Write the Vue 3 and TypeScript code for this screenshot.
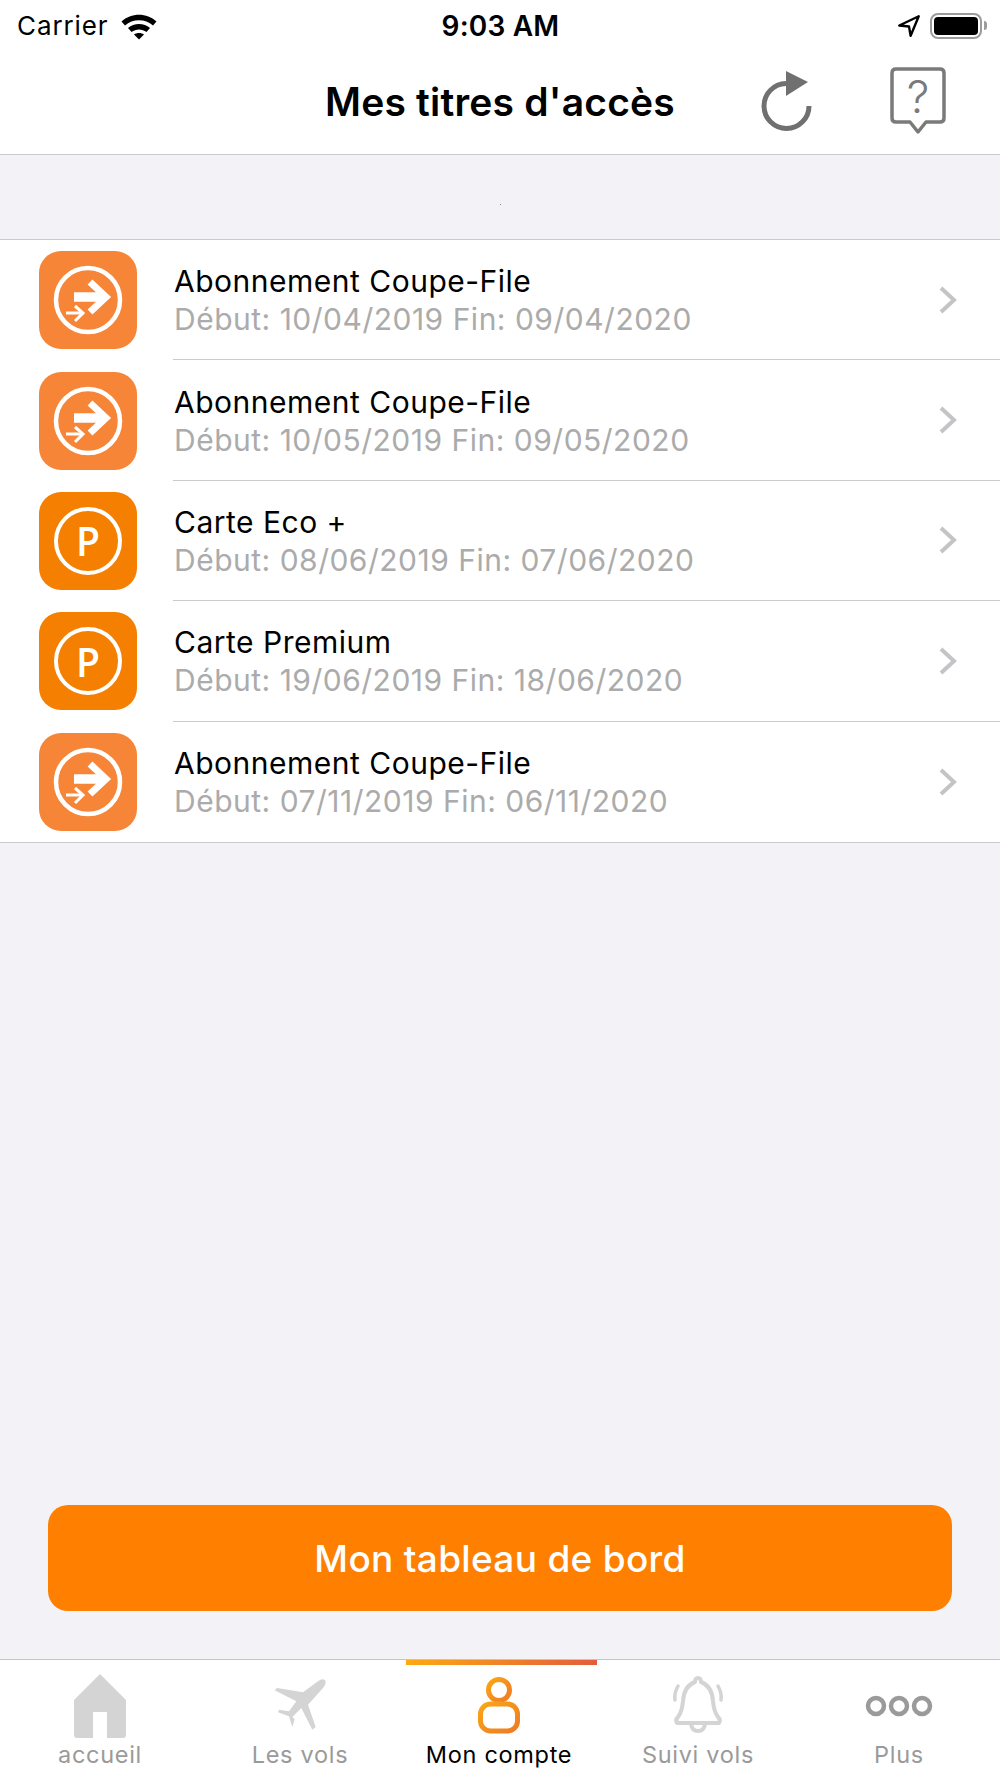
<template>
  <div class="screen">
    <header class="top">
      <div class="status">
        <div class="status-left">
          <span>Carrier</span>
          <svg class="wifi" width="38" height="28" viewBox="0 0 38 28">
            <path d="M1.5 9.5C11 .5 27 .5 36.5 9.5L33 13.5C25.5 6.5 12.5 6.500 5 13.5Z" />
            <path d="M8 16C14 10.500 24 10.500 30 16L26.500 20C22 16.500 16 16.500 11.500 20Z" />
            <path d="M14 22.500C17 20.500 21 20.500 24 22.500L19 27.500Z" />
          </svg>
        </div>
        <div class="time">9:03 AM</div>
        <div class="status-right">
          <svg width="26" height="26" viewBox="0 0 24 24">
            <path d="M21 3 3 11.500 12 12.500 13.500 21Z" fill="none" stroke="#000" stroke-width="2.200" stroke-linejoin="round" />
          </svg>
          <div class="battery"><div class="battery-fill"></div></div>
          <div class="battery-tip"></div>
        </div>
      </div>
      <div class="nav">
        <div></div>
        <h1>Mes titres d'accès</h1>
        <div class="nav-actions">
          <svg class="refresh" width="60" height="70" viewBox="0 0 60 70">
            <path d="M27 16.500A22.500 22.500 0 1 0 50 39" fill="none" stroke="#707070" stroke-width="5" />
            <path d="M27 4 49 15 27 29Z" fill="#707070" />
          </svg>
          <div class="help">
            <svg width="60" height="70" viewBox="0 0 60 70">
              <path d="M8 2H52Q56 2 56 6V51Q56 55 52 55H38L30 65 22 55H8Q4 55 4 51V6Q4 2 8 2Z" fill="none" stroke="#7a7a7a" stroke-width="3.500" stroke-linejoin="round" />
            </svg>
            <span>?</span>
          </div>
        </div>
      </div>
    </header>

    <div class="gap"><i class="dot"></i></div>

    <ul class="list">
      <li v-for="(item, i) in items" :key="i" class="row">
        <div class="badge" :class="item.kind">
          <svg v-if="item.kind === 'pass'" width="98" height="98" viewBox="0 0 98 98">
            <circle cx="49" cy="49" r="32" fill="none" stroke="#fff" stroke-width="4.500" />
            <path d="M35 46H64" stroke="#fff" stroke-width="9.500" fill="none" />
            <path d="M51 31 67 46 51 61" stroke="#fff" stroke-width="7" fill="none" />
            <path d="M27 62H42" stroke="#fff" stroke-width="3" fill="none" />
            <path d="M36 55 44 62 36 70" stroke="#fff" stroke-width="3" fill="none" />
          </svg>
          <div v-else class="park">P</div>
        </div>
        <div class="body" :class="{ last: i === items.length - 1 }">
          <div class="texts">
            <div class="name">{{ item.name }}</div>
            <div class="dates">Début: {{ item.from }} Fin: {{ item.to }}</div>
          </div>
          <svg class="chevron" width="20" height="30" viewBox="0 0 20 30">
            <path d="M3 3 16 15 3 27" fill="none" stroke="#c4c4c7" stroke-width="4" />
          </svg>
        </div>
      </li>
    </ul>

    <div class="spacer"></div>

    <button class="dash">Mon tableau de bord</button>

    <nav class="tabs">
      <div class="tab">
        <svg width="60" height="68" viewBox="0 0 60 68">
          <path d="M30 3 56 29V64Q56 67 53 67H37V41H23V67H7Q4 67 4 64V29Z" fill="#d4d4d4" />
        </svg>
        <span>accueil</span>
      </div>
      <div class="tab">
        <svg width="60" height="68" viewBox="0 0 180 204">
          <path transform="translate(-811 -94)" d="M955 125Q968 115 976 122 982 130 970 145L925 195 948 262 938 270 905 205 878 232 885 238 878 262 868 230 835 218 838 210 868 215 890 185 825 152 832 145 910 158Z" fill="#d4d4d4" />
        </svg>
        <span>Les vols</span>
      </div>
      <div class="tab active">
        <svg width="60" height="68" viewBox="0 0 60 68">
          <defs>
            <linearGradient id="personGrad" x1="0" y1="0" x2="1" y2="1">
              <stop offset="0" stop-color="#fba614" />
              <stop offset="1" stop-color="#ee7b26" />
            </linearGradient>
          </defs>
          <circle cx="30" cy="19" r="10.500" fill="none" stroke="url(#personGrad)" stroke-width="5" />
          <rect x="11.500" y="33" width="37" height="27" rx="10" fill="none" stroke="url(#personGrad)" stroke-width="5" />
        </svg>
        <span>Mon compte</span>
      </div>
      <div class="tab">
        <svg width="60" height="68" viewBox="0 0 60 68">
          <path d="M9 52H51Q53 49 50 46 46 41 45 30 44 15 33 11 33 7 30 7 27 7 27 11 16 15 15 30 14 41 10 46 7 49 9 52Z" fill="none" stroke="#d4d4d4" stroke-width="4" stroke-linejoin="round" />
          <path d="M23 53Q24 60 30 60 36 60 37 53" fill="none" stroke="#d4d4d4" stroke-width="4" />
          <path d="M10 15Q6 22 7 29M50 15Q54 22 53 29" fill="none" stroke="#d4d4d4" stroke-width="3.500" stroke-linecap="round" />
        </svg>
        <span>Suivi vols</span>
      </div>
      <div class="tab">
        <svg width="70" height="68" viewBox="0 0 70 68">
          <g fill="none" stroke="#9a9a9a" stroke-width="4.500">
            <circle cx="12" cy="35" r="8" />
            <circle cx="35" cy="35" r="8" />
            <circle cx="58" cy="35" r="8" />
          </g>
        </svg>
        <span>Plus</span>
      </div>
      <div class="tab-mark"></div>
    </nav>
  </div>
</template>

<script setup lang="ts">
interface Pass {
  kind: 'pass' | 'parking'
  name: string
  from: string
  to: string
}

const items: Pass[] = [
  { kind: 'pass', name: 'Abonnement Coupe-File', from: '10/04/2019', to: '09/04/2020' },
  { kind: 'pass', name: 'Abonnement Coupe-File', from: '10/05/2019', to: '09/05/2020' },
  { kind: 'parking', name: 'Carte Eco +', from: '08/06/2019', to: '07/06/2020' },
  { kind: 'parking', name: 'Carte Premium', from: '19/06/2019', to: '18/06/2020' },
  { kind: 'pass', name: 'Abonnement Coupe-File', from: '07/11/2019', to: '06/11/2020' }
]
</script>

<style>
html,
body {
  margin: 0;
  background: #f2f2f7;
}
</style>

<style scoped>
.screen {
  width: 1000px;
  height: 1778px;
  display: flex;
  flex-direction: column;
  background: #f2f2f7;
  font-family: Inter, "Liberation Sans", sans-serif;
  color: #000;
  overflow: hidden;
}

.top {
  height: 154px;
  background: #fff;
  border-bottom: 1px solid #cbcbcf;
  flex-shrink: 0;
}

.status {
  height: 50px;
  padding: 1px 13px 0 17px;
  box-sizing: border-box;
  display: grid;
  grid-template-columns: 1fr auto 1fr;
  align-items: center;
}

.status-left {
  display: flex;
  align-items: center;
  gap: 11px;
  font-size: 26px;
  letter-spacing: 0.9px;
}

.wifi path {
  fill: #000;
}

.time {
  font-size: 28px;
  font-weight: 600;
  letter-spacing: 0.2px;
  margin-left: -3px;
}

.status-right {
  display: flex;
  justify-content: flex-end;
  align-items: center;
  gap: 6px;
}

.battery {
  width: 52px;
  height: 26px;
  box-sizing: border-box;
  border: 2px solid #9c9c9c;
  border-radius: 8px;
  padding: 2px;
  margin-left: 2px;
}

.battery-fill {
  height: 100%;
  background: #000;
  border-radius: 4px;
}

.battery-tip {
  width: 3px;
  height: 9px;
  background: #9c9c9c;
  border-radius: 0 3px 3px 0;
  margin-left: -4px;
}

.nav {
  height: 104px;
  display: grid;
  grid-template-columns: 1fr auto 1fr;
  align-items: center;
}

h1 {
  margin: 0 0 1px;
  font-size: 39px;
  font-weight: 600;
  letter-spacing: 0.2px;
}

.nav-actions {
  display: flex;
  justify-content: flex-end;
  align-items: center;
  gap: 69px;
  padding-right: 52px;
}

.help {
  position: relative;
  height: 70px;
}

.help span {
  position: absolute;
  left: 0;
  right: 0;
  top: 2px;
  text-align: center;
  font-size: 45px;
  font-weight: 300;
  color: #7a7a7a;
}

.gap {
  height: 84px;
  border-bottom: 1px solid #cbcbcf;
  flex-shrink: 0;
  position: relative;
}

.dot {
  position: absolute;
  left: 500px;
  top: 49px;
  width: 1px;
  height: 1px;
  background: #8a8a8a;
}

.list {
  list-style: none;
  margin: 0;
  padding: 0;
  background: #fff;
  border-bottom: 1px solid #cbcbcf;
}

.row {
  height: 120.400px;
  display: flex;
  align-items: center;
  padding-left: 39px;
}

.badge {
  width: 98px;
  height: 98px;
  border-radius: 22px;
  flex-shrink: 0;
  display: flex;
  align-items: center;
  justify-content: center;
}

.badge.pass {
  background: #f68537;
}

.badge.parking {
  background: #f47f00;
}

.park {
  width: 68px;
  height: 68px;
  box-sizing: border-box;
  border: 4.500px solid #fff;
  border-radius: 50%;
  display: flex;
  align-items: center;
  justify-content: center;
  color: #fff;
  font-family: "Open Sans", sans-serif;
  font-size: 39px;
  font-weight: 600;
  line-height: 1;
}

.body {
  margin-left: 36px;
  flex: 1;
  height: 100%;
  box-sizing: border-box;
  border-bottom: 1px solid #cbcbcf;
  display: flex;
  align-items: center;
  justify-content: space-between;
  padding-right: 42px;
}

.body.last {
  border-bottom: none;
}

.texts {
  padding: 1px 0 0 1px;
}

.name {
  font-size: 30px;
  line-height: 36px;
  letter-spacing: 0.5px;
}

.dates {
  margin-top: 2px;
  font-size: 30px;
  line-height: 36px;
  letter-spacing: 0.5px;
  color: #ababab;
}

.spacer {
  flex: 1;
}

.dash {
  margin: 0 48px 48px;
  height: 106px;
  flex-shrink: 0;
  border: none;
  border-radius: 20px;
  background: #ff8000;
  color: #fff;
  font-family: inherit;
  font-size: 37px;
  font-weight: 500;
  letter-spacing: 0.3px;
  padding-top: 2px;
}

.tabs {
  height: 118px;
  flex-shrink: 0;
  position: relative;
  display: grid;
  grid-template-columns: 200px 200px 198px 200px 202px;
  background: #fff;
  border-top: 1px solid #c4c4c4;
}

.tab {
  display: flex;
  flex-direction: column;
  align-items: center;
  padding-top: 11px;
  font-size: 23.500px;
  color: #9a9a9a;
  letter-spacing: 0.7px;
}

.tab svg {
  display: block;
}

.tab span {
  margin-top: 1px;
}

.tab.active {
  color: #000;
}

.tab-mark {
  position: absolute;
  left: 406px;
  top: 0;
  width: 191px;
  height: 5px;
  background: linear-gradient(90deg, #fdaa10, #e35c3b);
}
</style>
